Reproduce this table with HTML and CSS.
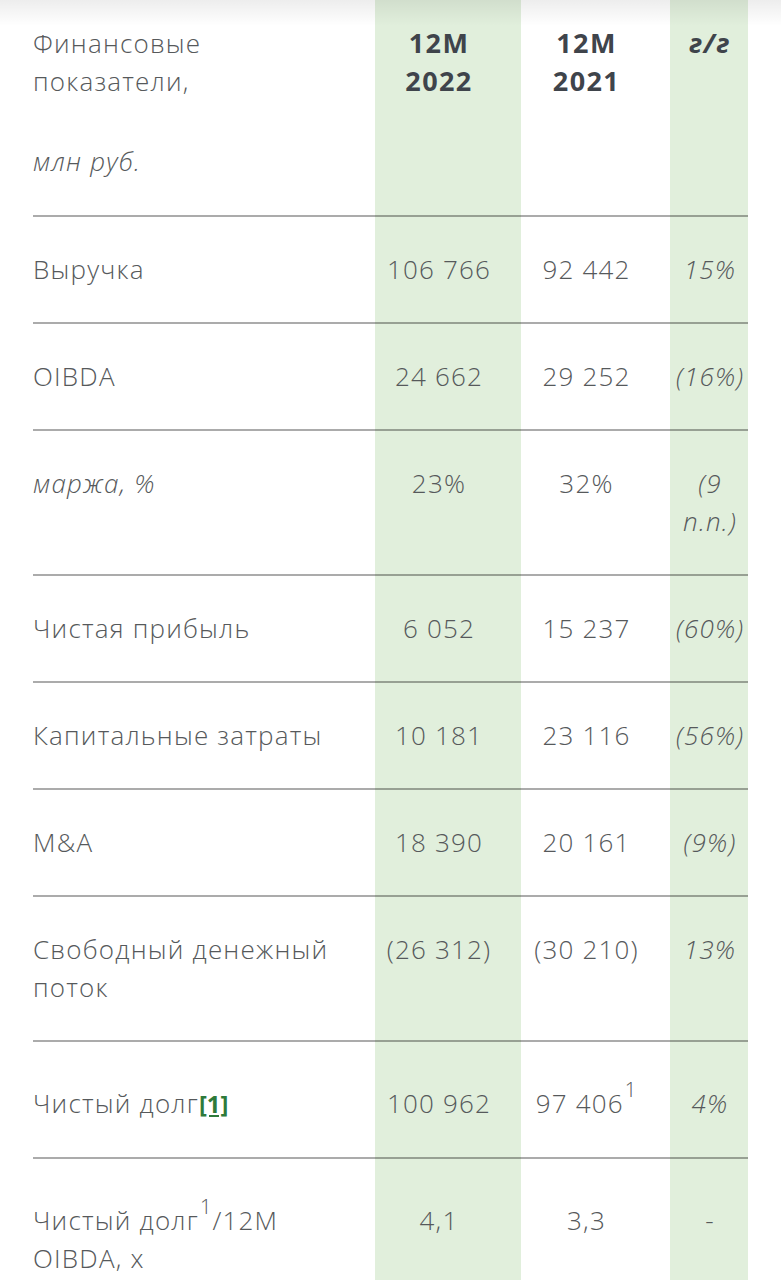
FILE: index.html
```html
<!DOCTYPE html>
<html lang="ru">
<head>
<meta charset="utf-8">
<link rel="stylesheet" href="styles.css">
</head>
<body>
<div class="page">
  <div class="shade"></div>
  <table class="fin">
    <colgroup>
      <col class="c-label">
      <col class="c-a">
      <col class="c-b">
      <col class="c-c">
    </colgroup>
    <thead>
      <tr>
        <th class="label head-label">Финансовые<br>показатели,<span class="unit">млн руб.</span></th>
        <th class="num hl head">12M<br>2022</th>
        <th class="num head">12M<br>2021</th>
        <th class="yoy hl head">г/г</th>
      </tr>
    </thead>
    <tbody>
      <tr><td class="label">Выручка</td><td class="num hl">106 766</td><td class="num">92 442</td><td class="yoy hl it">15%</td></tr>
      <tr><td class="label">OIBDA</td><td class="num hl">24 662</td><td class="num">29 252</td><td class="yoy hl it">(16%)</td></tr>
      <tr><td class="label"><em>маржа, %</em></td><td class="num hl">23%</td><td class="num">32%</td><td class="yoy hl it">(9 п.п.)</td></tr>
      <tr><td class="label">Чистая прибыль</td><td class="num hl">6 052</td><td class="num">15 237</td><td class="yoy hl it">(60%)</td></tr>
      <tr><td class="label">Капитальные затраты</td><td class="num hl">10 181</td><td class="num">23 116</td><td class="yoy hl it">(56%)</td></tr>
      <tr><td class="label">M&amp;A</td><td class="num hl">18 390</td><td class="num">20 161</td><td class="yoy hl it">(9%)</td></tr>
      <tr><td class="label">Свободный денежный поток</td><td class="num hl">(26 312)</td><td class="num">(30 210)</td><td class="yoy hl it">13%</td></tr>
      <tr><td class="label">Чистый долг<a class="ref" href="#">[1]</a></td><td class="num hl">100 962</td><td class="num">97 406<sup>1</sup></td><td class="yoy hl it">4%</td></tr>
      <tr><td class="label">Чистый долг<sup>1</sup>/12M OIBDA, x</td><td class="num hl">4,1</td><td class="num">3,3</td><td class="yoy hl">-</td></tr>
    </tbody>
  </table>
</div>
</body>
</html>
```
FILE: styles.css
```css
html, body {
  margin: 0;
  padding: 0;
  background: #ffffff;
}
.page {
  position: relative;
  width: 781px;
  height: 1280px;
  overflow: hidden;
  font-family: "Open Sans", "Liberation Sans", sans-serif;
  font-weight: 300;
  color: #56595b;
}
.shade {
  position: absolute;
  left: 0;
  top: 0;
  width: 100%;
  height: 26px;
  background: linear-gradient(to bottom, rgba(0,0,0,0.07), rgba(0,0,0,0));
  pointer-events: none;
}
.fin {
  margin-left: 33px;
  width: 715px;
  border-collapse: collapse;
  table-layout: fixed;
  font-size: 26px;
  letter-spacing: 1.2px;
  line-height: 38px;
}
.c-label { width: 342px; }
.c-a { width: 146px; }
.c-b { width: 149px; }
.c-c { width: 78px; }
th, td {
  vertical-align: baseline;
  padding: 33px 0 34px 0;
  border-bottom: 2px solid rgba(0, 0, 0, 0.33);
}
.fin th {
  padding-top: 24px;
  padding-bottom: 35px;
}
.label {
  text-align: left;
  font-weight: 300;
  padding-right: 8px;
}
.unit {
  display: block;
  margin-top: 42px;
  font-style: italic;
}
.num {
  text-align: center;
  padding-left: 4px;
  padding-right: 22px;
}
.yoy {
  text-align: center;
  padding-left: 6px;
  padding-right: 4px;
}
.hl {
  background: #e1efdc;
}
.head {
  font-weight: 700;
  font-size: 27px;
  letter-spacing: 1.4px;
  color: #3f444b;
}
th.yoy { font-style: italic; }
.it { font-style: italic; }
em { font-style: italic; }
sup {
  font-size: 0.78em;
  line-height: normal;
  vertical-align: 0.8em;
  letter-spacing: 0;
  margin-left: 1px;
  margin-right: 1px;
}
.ref {
  color: #2e7a3a;
  font-weight: 700;
  text-decoration: underline;
  font-size: 0.92em;
  letter-spacing: 0;
}
```
